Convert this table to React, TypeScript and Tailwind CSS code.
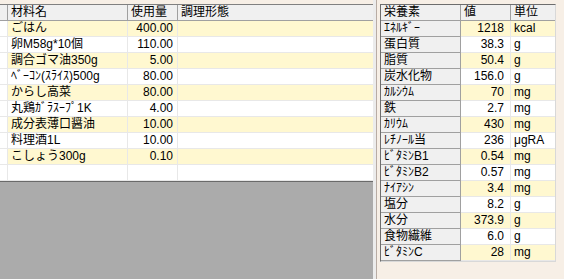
export default function App() {
  const ingredients = [
    { name: 'ごはん', qty: '400.00' },
    { name: '卵M58g*10個', qty: '110.00' },
    { name: '調合ゴマ油350g', qty: '5.00' },
    { name: 'ﾍﾞｰｺﾝ(ｽﾗｲｽ)500g', qty: '80.00' },
    { name: 'からし高菜', qty: '80.00' },
    { name: '丸鶏ｶﾞﾗｽｰﾌﾟ1K', qty: '4.00' },
    { name: '成分表薄口醤油', qty: '10.00' },
    { name: '料理酒1L', qty: '10.00' },
    { name: 'こしょう300g', qty: '0.10' },
    { name: '', qty: '' },
  ]

  const nutrients = [
    { name: 'ｴﾈﾙｷﾞｰ', value: '1218', unit: 'kcal' },
    { name: '蛋白質', value: '38.3', unit: 'g' },
    { name: '脂質', value: '50.4', unit: 'g' },
    { name: '炭水化物', value: '156.0', unit: 'g' },
    { name: 'ｶﾙｼｳﾑ', value: '70', unit: 'mg' },
    { name: '鉄', value: '2.7', unit: 'mg' },
    { name: 'ｶﾘｳﾑ', value: '430', unit: 'mg' },
    { name: 'ﾚﾁﾉｰﾙ当', value: '236', unit: 'μgRA' },
    { name: 'ﾋﾞﾀﾐﾝB1', value: '0.54', unit: 'mg' },
    { name: 'ﾋﾞﾀﾐﾝB2', value: '0.57', unit: 'mg' },
    { name: 'ﾅｲｱｼﾝ', value: '3.4', unit: 'mg' },
    { name: '塩分', value: '8.2', unit: 'g' },
    { name: '水分', value: '373.9', unit: 'g' },
    { name: '食物繊維', value: '6.0', unit: 'g' },
    { name: 'ﾋﾞﾀﾐﾝC', value: '28', unit: 'mg' },
  ]

  return (
    <div className="w-[564px] h-[279px] overflow-hidden flex bg-[#f7efe6] text-[12px] leading-[15px] text-black font-['Liberation_Sans','Noto_Sans_CJK_JP',sans-serif]">
      {/* Ingredient grid */}
      <div className="w-[373px] pt-[4px] flex flex-col">
        <div className="flex flex-col bg-white border-t border-[#808080]">
          {/* Header */}
          <div className="flex h-[16px] bg-[#f0f0f0] border-b border-[#a0a0a0]">
            <div className="w-[8px] border-r border-[#a0a0a0]"></div>
            <div className="w-[120px] pl-[3px] border-r border-[#a0a0a0] flex items-center">材料名</div>
            <div className="w-[50px] pl-[3px] border-r border-[#a0a0a0] flex items-center">使用量</div>
            <div className="flex-1 pl-[3px] flex items-center">調理形態</div>
          </div>
          {ingredients.map((row, idx) => (
            <div
              key={idx}
              className={`flex h-[16px] border-b border-[#e8e8e8] ${idx % 2 === 0 && row.name ? 'bg-[#fff8d0]' : 'bg-white'}`}
            >
              <div className="w-[8px] bg-white border-r border-[#e8e8e8]"></div>
              <div className="w-[120px] pl-[3px] border-r border-[#e8e8e8] flex items-center whitespace-nowrap">{row.name}</div>
              <div className="w-[50px] pr-[4px] border-r border-[#e8e8e8] flex items-center justify-end">{row.qty}</div>
              <div className="flex-1"></div>
            </div>
          ))}
        </div>
        <div className="flex-1 bg-[#ababab] border-t border-[#6a6a6a]"></div>
      </div>

      {/* Splitter */}
      <div className="w-[3px] bg-[#ececec]"></div>
      <div className="w-[1px] bg-[#b8aca4]"></div>

      {/* Nutrient grid */}
      <div className="flex-1 pl-[3px] pt-[4px]">
        <div className="w-[176px] flex flex-col border-l border-t border-[#6d6d6d] border-r border-b border-r-[#d8d8d8] border-b-[#d8d8d8]">
          <div className="flex h-[16px] bg-[#f0f0f0] border-b border-[#a0a0a0]">
            <div className="w-[80px] pl-[3px] border-r border-[#a0a0a0] flex items-center">栄養素</div>
            <div className="w-[50px] pl-[3px] border-r border-[#a0a0a0] flex items-center">値</div>
            <div className="flex-1 pl-[3px] flex items-center">単位</div>
          </div>
          {nutrients.map((n, idx) => (
            <div key={n.name} className="flex h-[16px]">
              <div className="w-[80px] pl-[3px] bg-[#f0f0f0] border-r border-b border-[#a0a0a0] flex items-center whitespace-nowrap">{n.name}</div>
              <div
                className={`flex ${idx % 2 === 0 ? 'bg-[#fff8d0]' : 'bg-white'} flex-1 border-b border-[#e8e8e8]`}
              >
                <div className="w-[50px] pr-[6px] border-r border-[#e8e8e8] flex items-center justify-end">{n.value}</div>
                <div className="flex-1 pl-[3px] flex items-center">{n.unit}</div>
              </div>
            </div>
          ))}
        </div>
      </div>
    </div>
  )
}
